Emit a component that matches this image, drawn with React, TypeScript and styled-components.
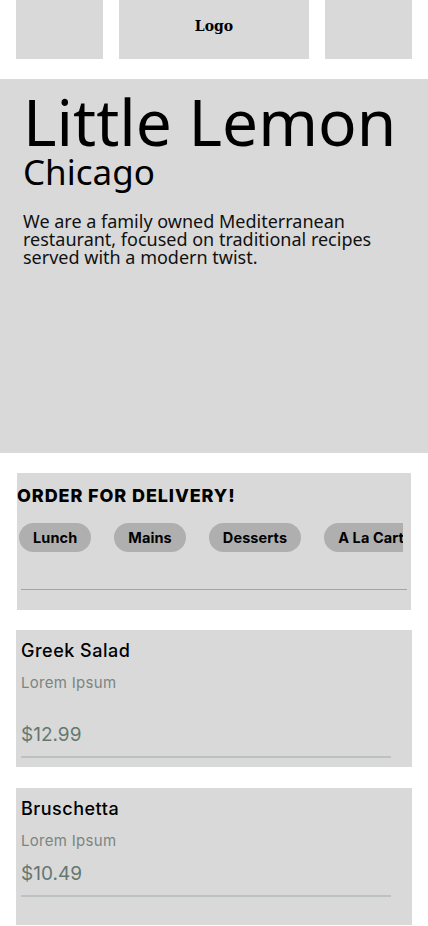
import React from "react";
import styled, { createGlobalStyle } from "styled-components";

const Global = createGlobalStyle`
  html, body { margin: 0; padding: 0; background: #ffffff; }
  body { font-family: "Noto Sans", sans-serif; }
  * { box-sizing: border-box; }
`;

const Page = styled.div`
  width: 428px;
  display: flex;
  flex-direction: column;
`;

const Header = styled.header`
  display: flex;
  gap: 16px;
  padding: 0 16px;
  height: 59px;
`;

const NavBox = styled.div<{ $w: number }>`
  width: ${(p) => p.$w}px;
  background: #d9d9d9;
  display: flex;
  align-items: center;
  justify-content: center;
`;

const LogoText = styled.span`
  font-family: "DejaVu Serif", serif;
  font-weight: 700;
  font-size: 14px;
  color: #000;
  margin-top: -7px;
`;

const Hero = styled.section`
  margin-top: 20px;
  height: 374px;
  background: #d9d9d9;
  padding: 11px 23px 0;
`;

const Title = styled.h1`
  margin: 0;
  font-family: "Noto Sans", sans-serif;
  font-weight: 400;
  font-size: 64px;
  line-height: 64px;
  color: #000;
`;

const City = styled.h2`
  margin: 0;
  font-family: "Noto Sans", sans-serif;
  font-weight: 400;
  font-size: 35px;
  line-height: 36px;
  color: #000;
`;

const Blurb = styled.p`
  margin: 22px 0 0;
  font-family: "Noto Sans", sans-serif;
  font-size: 18px;
  line-height: 18px;
  color: #111;
`;

const Order = styled.section`
  margin: 20px 17px 0;
  height: 137px;
  background: #d9d9d9;
  display: flex;
  flex-direction: column;
`;

const OrderTitle = styled.h3`
  margin: 12px 0 0;
  font-family: "Inter", sans-serif;
  font-weight: 800;
  font-size: 18px;
  line-height: 22px;
  letter-spacing: 0.9px;
  color: #000;
`;

const PillRow = styled.div`
  display: flex;
  gap: 23px;
  margin: 16px 8px 0 2px;
  overflow: hidden;
`;

const Pill = styled.button`
  flex: none;
  height: 29px;
  padding: 0 14px;
  border: none;
  border-radius: 15px;
  background: #afafaf;
  font-family: "Inter", sans-serif;
  font-weight: 700;
  font-size: 14.5px;
  letter-spacing: 0.1px;
  color: #000;
  white-space: nowrap;
`;

const Divider = styled.hr`
  margin: 37px 4px 0;
  border: none;
  height: 1px;
  background: #9ea7a3;
`;

const Card = styled.article<{ $gap: number }>`
  margin: ${(p) => p.$gap}px 16px 0;
  height: 137px;
  background: #d9d9d9;
  padding: 10px 21px 0 5px;
  display: flex;
  flex-direction: column;
`;

const DishName = styled.div`
  font-family: "Inter", sans-serif;
  font-weight: 500;
  font-size: 18px;
  line-height: 22px;
  letter-spacing: 0.5px;
  color: #000;
`;

const DishDesc = styled.div`
  margin-top: 11px;
  font-family: "Inter", sans-serif;
  font-size: 15px;
  line-height: 20px;
  letter-spacing: 0.3px;
  color: #7b8581;
`;

const Price = styled.div<{ $top: number }>`
  margin-top: ${(p) => p.$top}px;
  font-family: "Inter", sans-serif;
  font-size: 19px;
  line-height: 24px;
  color: #647770;
`;

const CardLine = styled.div`
  margin-top: 9px;
  height: 2px;
  background: #bcc2c0;
`;

const categories = ["Lunch", "Mains", "Desserts", "A La Carte", "Specials"];

const dishes = [
  { name: "Greek Salad", desc: "Lorem Ipsum", price: "$12.99", top: 30, gap: 20 },
  { name: "Bruschetta", desc: "Lorem Ipsum", price: "$10.49", top: 11, gap: 21 },
];

export default function App() {
  return (
    <>
      <Global />
      <Page>
        <Header>
          <NavBox $w={87} />
          <NavBox $w={190}>
            <LogoText>Logo</LogoText>
          </NavBox>
          <NavBox $w={87} />
        </Header>
        <Hero>
          <Title>Little Lemon</Title>
          <City>Chicago</City>
          <Blurb>
            We are a family owned Mediterranean restaurant, focused on traditional recipes served with a modern twist.
          </Blurb>
        </Hero>
        <Order>
          <OrderTitle>ORDER FOR DELIVERY!</OrderTitle>
          <PillRow>
            {categories.map((c) => (
              <Pill key={c}>{c}</Pill>
            ))}
          </PillRow>
          <Divider />
        </Order>
        {dishes.map((d) => (
          <Card key={d.name} $gap={d.gap}>
            <DishName>{d.name}</DishName>
            <DishDesc>{d.desc}</DishDesc>
            <Price $top={d.top}>{d.price}</Price>
            <CardLine />
          </Card>
        ))}
      </Page>
    </>
  );
}
